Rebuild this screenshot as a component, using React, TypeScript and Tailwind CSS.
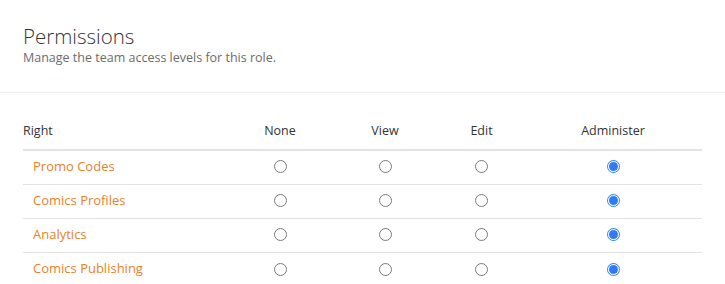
import React from "react"

type Level = "none" | "view" | "edit" | "admin"

const rights: { name: string; level: Level }[] = [
  { name: "Promo Codes", level: "admin" },
  { name: "Comics Profiles", level: "admin" },
  { name: "Analytics", level: "admin" },
  { name: "Comics Publishing", level: "admin" },
]

const levels: Level[] = ["none", "view", "edit", "admin"]

function Radio({ checked }: { checked: boolean }) {
  if (checked) {
    return (
      <span className="flex h-[13px] w-[13px] items-center justify-center rounded-full bg-[#3b82f6]">
        <span className="flex h-[11px] w-[11px] items-center justify-center rounded-full bg-white">
          <span className="h-[9px] w-[9px] rounded-full bg-[#2f7bf5]" />
        </span>
      </span>
    )
  }
  return <span className="block h-[13px] w-[13px] rounded-full border border-[#7a7a7a] bg-white" />
}

const cols = "grid grid-cols-[207px_100px_110px_83px_180px]"

export default function App() {
  return (
    <div
      className="h-[284px] w-[725px] overflow-hidden bg-white text-[#333]"
      style={{ fontFamily: "'Open Sans', Lato, sans-serif" }}
    >
      {/* Header */}
      <div className="h-[93px] border-b border-[#ececec] px-[23px] pt-[22px]">
        <h2 className="text-[20.5px] font-light leading-7 text-[#333]">Permissions</h2>
        <p className="text-[12.5px] leading-4 text-[#6b6b6b]">Manage the team access levels for this role.</p>
      </div>

      {/* Table */}
      <div className="px-[23px]">
        <div className={`${cols} border-b-2 border-[#e3e3e3] pb-[6px] pt-[26px] text-[12.5px] leading-6`}>
          <div>Right</div>
          <div className="text-center">None</div>
          <div className="text-center">View</div>
          <div className="text-center">Edit</div>
          <div className="text-center">Administer</div>
        </div>
        {rights.map((r, i) => (
          <div
            key={r.name}
            className={`${cols} h-[34px] items-center text-[13px] ${i < rights.length - 1 ? "border-b border-[#e3e3e3]" : ""}`}
          >
            <div className="pb-[2px] pl-[10px] text-[#e8822d]">{r.name}</div>
            {levels.map((l) => (
              <div key={l} className="flex justify-center pb-[2px]">
                <Radio checked={r.level === l} />
              </div>
            ))}
          </div>
        ))}
      </div>
    </div>
  )
}
